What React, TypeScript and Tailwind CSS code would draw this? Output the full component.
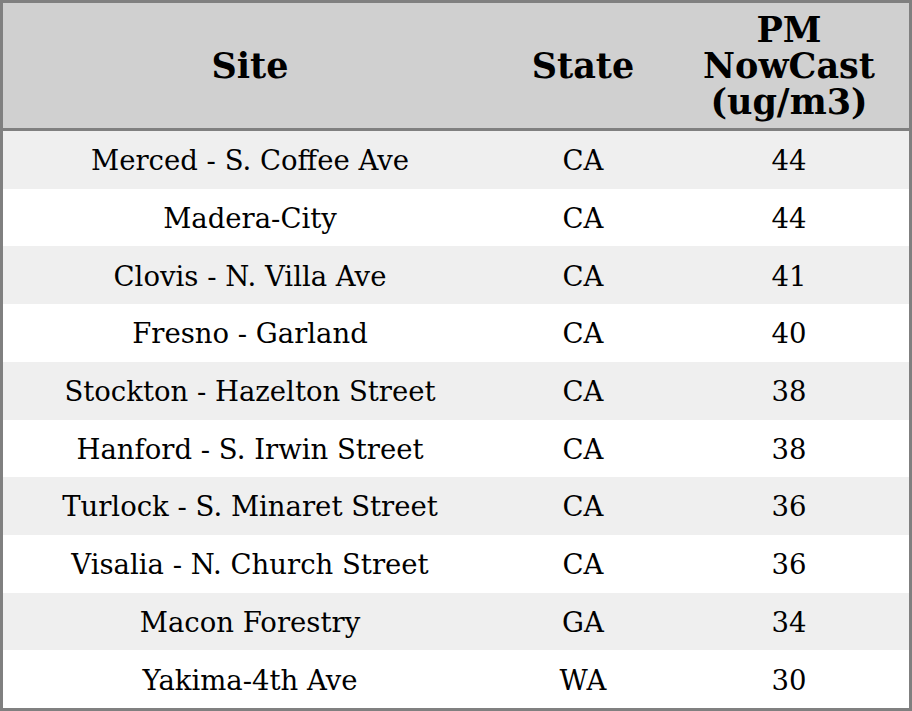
const rows = [
  { site: "Merced - S. Coffee Ave", state: "CA", value: 44 },
  { site: "Madera-City", state: "CA", value: 44 },
  { site: "Clovis - N. Villa Ave", state: "CA", value: 41 },
  { site: "Fresno - Garland", state: "CA", value: 40 },
  { site: "Stockton - Hazelton Street", state: "CA", value: 38 },
  { site: "Hanford - S. Irwin Street", state: "CA", value: 38 },
  { site: "Turlock - S. Minaret Street", state: "CA", value: 36 },
  { site: "Visalia - N. Church Street", state: "CA", value: 36 },
  { site: "Macon Forestry", state: "GA", value: 34 },
  { site: "Yakima-4th Ave", state: "WA", value: 30 },
];

export default function App() {
  return (
    <div className="flex h-[711px] w-[912px] flex-col border-[3px] border-[#808080] bg-white font-['DejaVu_Serif',serif] text-black">
      <div className="grid h-[128px] shrink-0 grid-cols-[494px_172px_240px] border-b-[3px] border-[#808080] bg-[#d0d0d0] text-[35px] font-bold leading-[36px]">
        <div className="flex items-center justify-center text-center">Site</div>
        <div className="flex items-center justify-center text-center">State</div>
        <div className="flex items-center justify-center text-center">
          PM
          <br />
          NowCast
          <br />
          (ug/m3)
        </div>
      </div>
      {rows.map((row, i) => (
        <div
          key={row.site}
          className={`grid flex-1 grid-cols-[494px_172px_240px] items-center pt-[2px] text-center text-[27.5px] ${
            i % 2 === 0 ? "bg-[#efefef]" : "bg-white"
          }`}
        >
          <div>{row.site}</div>
          <div>{row.state}</div>
          <div>{row.value}</div>
        </div>
      ))}
    </div>
  );
}
